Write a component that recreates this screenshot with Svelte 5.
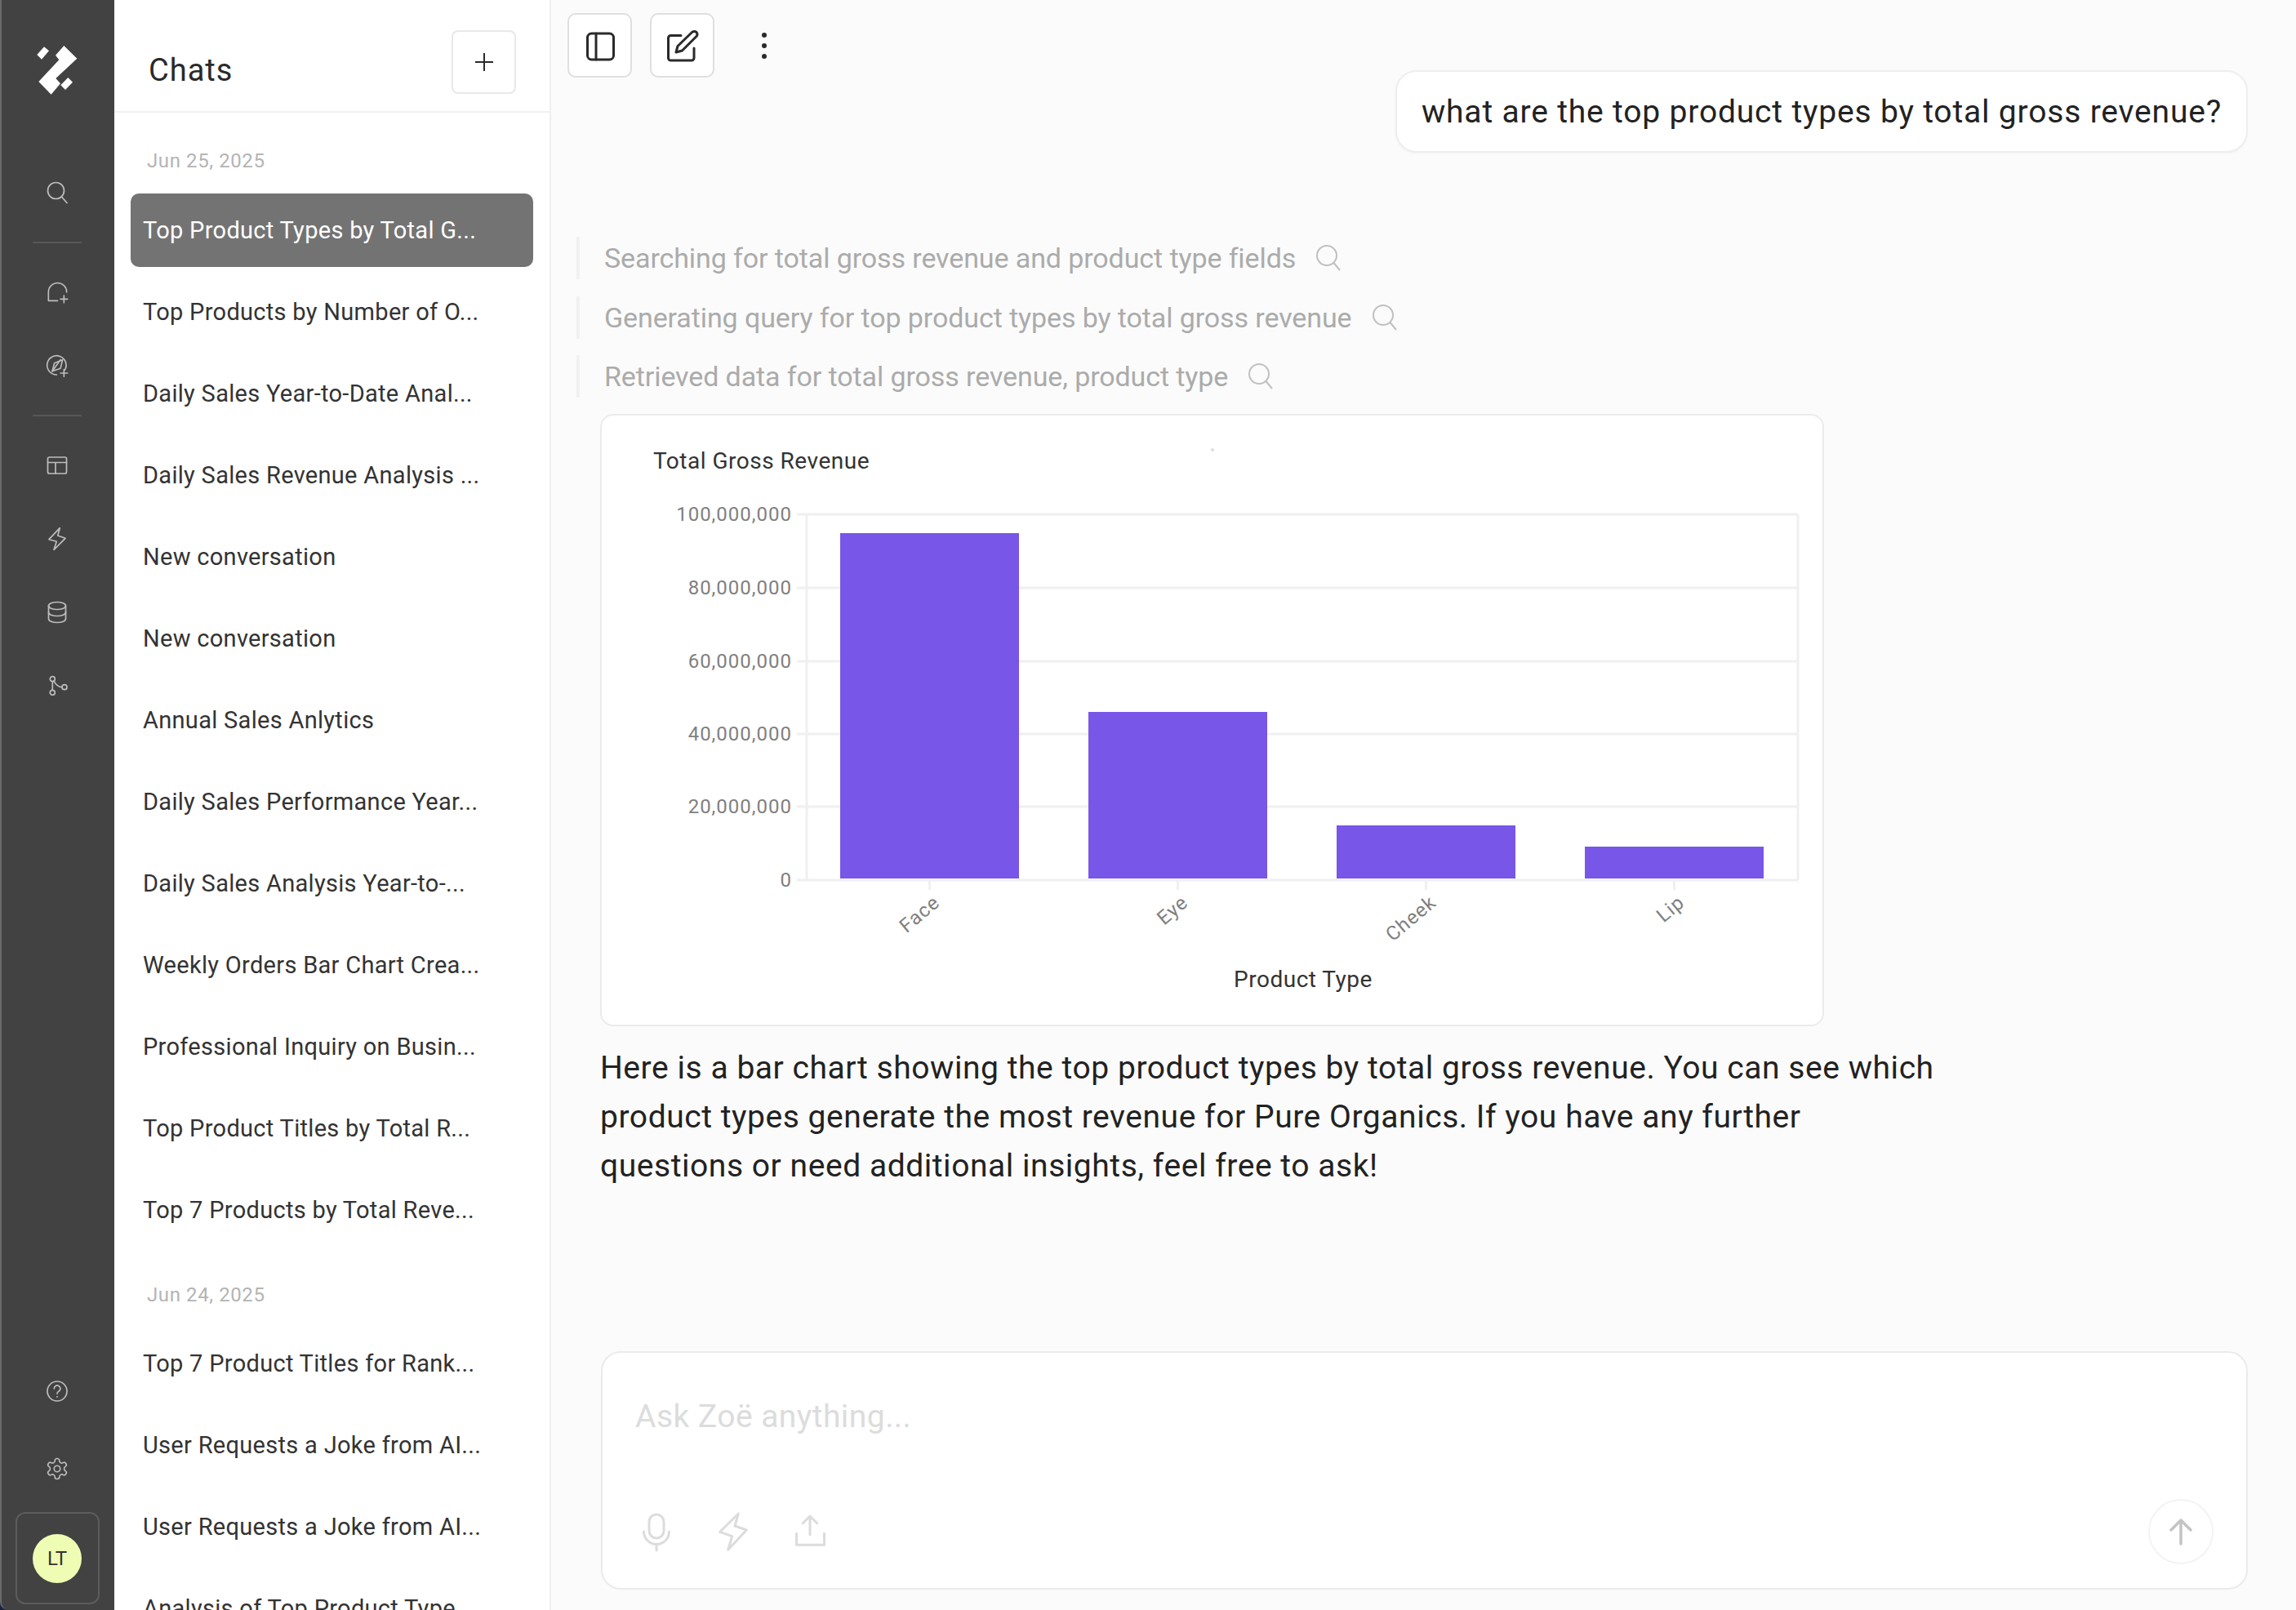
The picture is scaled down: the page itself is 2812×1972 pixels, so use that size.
<script lang="ts">
  const firstGroup = [
    "Top Product Types by Total G...",
    "Top Products by Number of O...",
    "Daily Sales Year-to-Date Anal...",
    "Daily Sales Revenue Analysis ...",
    "New conversation",
    "New conversation",
    "Annual Sales Anlytics",
    "Daily Sales Performance Year...",
    "Daily Sales Analysis Year-to-...",
    "Weekly Orders Bar Chart Crea...",
    "Professional Inquiry on Busin...",
    "Top Product Titles by Total R...",
    "Top 7 Products by Total Reve...",
  ];
  const secondGroup = [
    "Top 7 Product Titles for Rank...",
    "User Requests a Joke from AI...",
    "User Requests a Joke from AI...",
    "Analysis of Top Product Type",
  ];
  const steps = [
    "Searching for total gross revenue and product type fields",
    "Generating query for top product types by total gross revenue",
    "Retrieved data for total gross revenue, product type",
  ];

  // chart values, in page pixels of the plot area
  const plotLeft = 988;
  const plotRight = 2202;
  const axisY = 1078;
  const gridLines = [
    { y: 630, label: "100,000,000" },
    { y: 720, label: "80,000,000" },
    { y: 810, label: "60,000,000" },
    { y: 899, label: "40,000,000" },
    { y: 988, label: "20,000,000" },
    { y: 1078, label: "0" },
  ];
  const bars = [
    { name: "Face", x: 1029, top: 653 },
    { name: "Eye", x: 1333, top: 872 },
    { name: "Cheek", x: 1637, top: 1011 },
    { name: "Lip", x: 1941, top: 1037 },
  ];
  const barWidth = 219;
</script>

<div class="app">
  <nav class="rail">
    <div class="logo">
      <svg width="80" height="80" viewBox="0 0 240 240" fill="#fff">
        <path d="M72 37 90 52 63 83 46 66Z" />
        <path d="M145 33 193 80 115 153 132 172 98 212 52 165 127 85 114 68Z" />
        <path d="M160 150 177 167 150 195 133 178Z" />
      </svg>
    </div>

    <div class="rail-item">
      <svg width="30" height="30" viewBox="0 0 30 30" class="rail-icon">
        <circle cx="13.5" cy="12.5" r="10" />
        <path d="M20.5 20 27 27.5" />
      </svg>
    </div>
    <div class="rail-sep"></div>
    <div class="rail-item">
      <svg width="60" height="60" viewBox="0 0 180 180" class="rail-icon wide">
        <path d="M92 130H58V98a33.500 33.500 0 0 1 67 0" transform="translate(0 -9)" />
        <path d="M115 102v26M102 115h26" />
      </svg>
    </div>
    <div class="rail-item">
      <svg width="60" height="60" viewBox="0 0 180 180" class="rail-icon wide">
        <path d="M118 106A35 35 0 1 0 88 123" />
        <path d="M110 68 102 100 72 110 80 80Z" />
        <path d="M72 110 102 68" />
        <path d="M115 104v26M102 117h26" />
      </svg>
    </div>
    <div class="rail-sep"></div>
    <div class="rail-item">
      <svg width="30" height="30" viewBox="0 0 30 30" class="rail-icon">
        <rect x="3.500" y="5" width="23" height="20" rx="2" />
        <path d="M3.500 11.500h23M13 11.500V25" />
      </svg>
    </div>
    <div class="rail-item">
      <svg width="30" height="30" viewBox="0 0 30 30" class="rail-icon">
        <path d="M18.300 1.700 5 15.700 14.300 18.300 11 28.300 25 14.300 15.700 11Z" />
      </svg>
    </div>
    <div class="rail-item">
      <svg width="30" height="30" viewBox="0 0 30 30" class="rail-icon">
        <ellipse cx="15" cy="7" rx="10.500" ry="4.500" />
        <path d="M4.500 7v16c0 2.500 4.700 4.500 10.500 4.500s10.500-2 10.500-4.500V7" />
        <path d="M4.500 15c0 2.500 4.700 4.500 10.500 4.500s10.500-2 10.500-4.500" />
      </svg>
    </div>
    <div class="rail-item">
      <svg width="30" height="30" viewBox="0 0 30 30" class="rail-icon">
        <circle cx="9.300" cy="6.700" r="3" />
        <circle cx="9.300" cy="23.300" r="3" />
        <circle cx="24" cy="16.700" r="3" />
        <path d="M9.300 9.700v10.600M11 9.300c2 3.500 4.500 7 10 7.400" />
      </svg>
    </div>

    <div class="rail-bottom">
      <div class="rail-item">
        <svg width="30" height="30" viewBox="0 0 30 30" class="rail-icon">
          <circle cx="15" cy="15" r="12" />
          <path d="M11.300 11.800a3.800 3.800 0 1 1 5.800 3.200c-1.300.8-2.100 1.500-2.100 3" />
          <path d="M15 21.500v.5" />
        </svg>
      </div>
      <div class="rail-item">
        <svg width="30" height="30" viewBox="0 0 24 24" class="rail-icon gear">
          <path d="M12.220 2h-.44a2 2 0 0 0-2 2v.18a2 2 0 0 1-1 1.730l-.43.25a2 2 0 0 1-2 0l-.15-.08a2 2 0 0 0-2.730.73l-.22.38a2 2 0 0 0 .73 2.730l.15.1a2 2 0 0 1 1 1.720v.51a2 2 0 0 1-1 1.740l-.15.09a2 2 0 0 0-.73 2.730l.22.38a2 2 0 0 0 2.730.73l.15-.08a2 2 0 0 1 2 0l.43.25a2 2 0 0 1 1 1.730V20a2 2 0 0 0 2 2h.44a2 2 0 0 0 2-2v-.18a2 2 0 0 1 1-1.730l.43-.25a2 2 0 0 1 2 0l.15.08a2 2 0 0 0 2.730-.73l.22-.39a2 2 0 0 0-.73-2.730l-.15-.08a2 2 0 0 1-1-1.740v-.5a2 2 0 0 1 1-1.740l.15-.09a2 2 0 0 0 .73-2.730l-.22-.38a2 2 0 0 0-2.730-.73l-.15.08a2 2 0 0 1-2 0l-.43-.25a2 2 0 0 1-1-1.730V4a2 2 0 0 0-2-2z" />
          <circle cx="12" cy="12" r="3" />
        </svg>
      </div>
      <div class="user-box">
        <div class="avatar">LT</div>
      </div>
    </div>
  </nav>

  <aside class="sidebar">
    <header class="side-head">
      <h1>Chats</h1>
      <button class="add-btn" aria-label="New chat">
        <svg width="30" height="30" viewBox="0 0 30 30" fill="none" stroke="#2a2a2a" stroke-width="2">
          <path d="M15 4v22M4 15h22" />
        </svg>
      </button>
    </header>
    <div class="chat-list">
      <div class="date">Jun 25, 2025</div>
      {#each firstGroup as title, i}
        <div class="chat" class:active={i === 0}>{title}</div>
      {/each}
      <div class="date second">Jun 24, 2025</div>
      {#each secondGroup as title}
        <div class="chat">{title}</div>
      {/each}
    </div>
  </aside>

  <main class="main">
    <div class="toolbar">
      <button class="tool-btn" aria-label="Toggle sidebar">
        <svg width="40" height="40" viewBox="0 0 40 40" class="tool-icon">
          <rect x="4.500" y="5" width="32" height="32" rx="5" />
          <path d="M15 5v32" />
        </svg>
      </button>
      <button class="tool-btn" aria-label="New note">
        <svg width="40" height="40" viewBox="0 0 40 40" class="tool-icon">
          <path d="M18 7.500H5.500a3 3 0 0 0-3 3V35a3 3 0 0 0 3 3H31a3 3 0 0 0 3-3V23" />
          <path d="M12 28 14 20.500 31.500 3.500Q34.500 1.500 37 3.500 39 6 37 8.500L19.500 26Z" />
        </svg>
      </button>
      <button class="more-btn" aria-label="More">
        <span></span><span></span><span></span>
      </button>
    </div>

    <div class="bubble">what are the top product types by total gross revenue?</div>

    <div class="steps">
      {#each steps as step}
        <div class="step">
          <span>{step}</span>
          <svg width="34" height="34" viewBox="0 0 34 34" fill="none" stroke="#c0c0c0" stroke-width="2">
            <circle cx="15" cy="14" r="12" />
            <path d="M23.500 23 31 32" />
          </svg>
        </div>
      {/each}
    </div>

    <section class="chart-card">
      <svg class="chart" width="1495" height="746" viewBox="737 509 1495 746">
        <text x="800" y="574" class="title">Total Gross Revenue</text>
        <circle cx="1485" cy="551" r="2" fill="#dedede" />
        {#each gridLines as line}
          <line x1="976" y1={line.y} x2={plotRight} y2={line.y} class="grid" />
          <text x="970" y={line.y + 8} text-anchor="end" class="tick">{line.label}</text>
        {/each}
        <line x1={plotLeft} y1="630" x2={plotLeft} y2={axisY} class="grid" />
        <line x1={plotRight} y1="630" x2={plotRight} y2={axisY} class="grid" />
        {#each bars as bar}
          <rect x={bar.x} y={bar.top} width={barWidth} height={axisY - 2 - bar.top} fill="#7856e8" />
          <line x1={bar.x + barWidth / 2} y1={axisY} x2={bar.x + barWidth / 2} y2="1090" class="grid" />
          <text
            x={bar.x + barWidth / 2 + 14}
            y="1108"
            text-anchor="end"
            class="tick"
            transform="rotate(-40 {bar.x + barWidth / 2 + 14} 1108)">{bar.name}</text>
        {/each}
        <text x="1596" y="1209" text-anchor="middle" class="title">Product Type</text>
      </svg>
    </section>

    <p class="answer">
      Here is a bar chart showing the top product types by total gross revenue. You can see which product types generate the most revenue for Pure Organics. If you have any further questions or need additional insights, feel free to ask!
    </p>

    <div class="composer">
      <div class="placeholder">Ask Zoë anything...</div>
      <div class="composer-row">
        <svg width="50" height="50" viewBox="0 0 50 50" class="composer-icon">
          <rect x="16" y="4" width="18" height="29" rx="9" />
          <path d="M9.500 25a15.500 15.500 0 0 0 31 0M25 40.500V48" />
        </svg>
        <svg width="50" height="50" viewBox="0 0 50 50" class="composer-icon">
          <path d="M31.300 3 8.700 25.300 23.700 30.700 18.700 47.300 41.300 23 27 18Z" />
        </svg>
        <svg width="50" height="50" viewBox="0 0 50 50" class="composer-icon">
          <path d="M25 6v22.700M16.300 14.700 25 6l8.700 8.700M8.500 27.300v14h34v-14" />
        </svg>
        <button class="send" aria-label="Send">
          <svg width="40" height="40" viewBox="0 0 40 40" fill="none" stroke="#c4c4c4" stroke-width="3.500" stroke-linecap="round" stroke-linejoin="round">
            <path d="M20 6v29M8 18 20 6l12 12" />
          </svg>
        </button>
      </div>
    </div>
  </main>
</div>

<style>
  :global(body) {
    margin: 0;
    font-family: "Roboto", "Liberation Sans", sans-serif;
    color: #222;
  }

  .app {
    display: flex;
    width: 2812px;
    height: 1972px;
    overflow: hidden;
    background: #1c2340;
  }

  .rail {
    width: 138px;
    flex-shrink: 0;
    display: flex;
    flex-direction: column;
    align-items: center;
    box-sizing: content-box;
    background: #424242;
    border-left: 2px solid #6a6a6a;
    border-bottom-left-radius: 10px;
  }

  .logo {
    height: 191px;
    padding-top: 45px;
    box-sizing: border-box;
    margin-left: -2px;
  }

  .rail-item {
    height: 90px;
    width: 100%;
    margin-left: -2px;
    display: flex;
    align-items: center;
    justify-content: center;
  }

  .rail-icon {
    fill: none;
    stroke: #bdbdbd;
    stroke-width: 1.700;
    stroke-linecap: round;
    stroke-linejoin: round;
  }

  .rail-icon.wide {
    stroke-width: 5;
  }

  .rail-icon.gear {
    stroke-width: 1.300;
  }

  .rail-sep {
    width: 60px;
    height: 2px;
    margin: 15px 0 15px -2px;
    background: #575757;
  }

  .rail-bottom {
    margin-top: auto;
    width: 100%;
    display: flex;
    flex-direction: column;
    align-items: center;
    gap: 5px;
    padding-bottom: 7px;
  }

  .user-box {
    width: 103px;
    height: 113px;
    box-sizing: border-box;
    margin: 3px 0 0 -2px;
    border: 2px solid #5c5c5c;
    border-radius: 12px;
    display: flex;
    align-items: center;
    justify-content: center;
  }

  .avatar {
    width: 60px;
    height: 60px;
    border-radius: 50%;
    background: #effcb4;
    color: #333;
    font-size: 24px;
    display: flex;
    align-items: center;
    justify-content: center;
  }

  .sidebar {
    width: 535px;
    flex-shrink: 0;
    box-sizing: border-box;
    background: #fff;
    border-right: 2px solid #eeeeee;
    display: flex;
    flex-direction: column;
    overflow: hidden;
  }

  .side-head {
    height: 138px;
    flex-shrink: 0;
    box-sizing: border-box;
    border-bottom: 2px solid #f1f1f1;
    padding: 37px 41px 0 42px;
    display: flex;
    justify-content: space-between;
    align-items: flex-start;
  }

  h1 {
    margin: 27px 0 0;
    font-size: 38px;
    font-weight: 400;
    letter-spacing: 1px;
    color: #2a2a2a;
    line-height: 44px;
  }

  .add-btn {
    width: 79px;
    height: 78px;
    padding: 0;
    background: #fff;
    border: 2px solid #e8e8e8;
    border-radius: 8px;
    display: flex;
    align-items: center;
    justify-content: center;
  }

  .chat-list {
    padding: 40px 20px 0;
  }

  .date {
    height: 38px;
    line-height: 38px;
    padding-left: 20px;
    font-size: 24px;
    color: #b4b4b4;
    margin: 0 0 21px 0;
    letter-spacing: 0.6px;
  }

  .date.second {
    margin-top: 40px;
    margin-bottom: 20px;
  }

  .chat {
    height: 90px;
    line-height: 90px;
    margin-bottom: 10px;
    padding-left: 15px;
    border-radius: 10px;
    font-size: 29px;
    letter-spacing: 0.3px;
    white-space: nowrap;
    color: #333;
  }

  .chat.active {
    background: #737373;
    color: #fff;
  }

  .main {
    flex: 1;
    min-width: 0;
    background: #fbfbfb;
    display: flex;
    flex-direction: column;
  }

  .toolbar {
    display: flex;
    align-items: center;
    gap: 22px;
    padding: 16px 0 0 20px;
  }

  .tool-btn {
    width: 79px;
    height: 79px;
    padding: 0;
    background: #fff;
    border: 2px solid #dfdfdf;
    border-radius: 10px;
    display: flex;
    align-items: center;
    justify-content: center;
  }

  .tool-icon {
    fill: none;
    stroke: #2a2a2a;
    stroke-width: 3;
    stroke-linejoin: round;
    stroke-linecap: round;
  }

  .more-btn {
    width: 40px;
    height: 60px;
    margin-left: 19px;
    padding: 0;
    border: 0;
    background: none;
    display: flex;
    flex-direction: column;
    align-items: center;
    justify-content: center;
    gap: 7px;
  }

  .more-btn span {
    width: 6px;
    height: 6px;
    border-radius: 50%;
    background: #2a2a2a;
  }

  .bubble {
    align-self: flex-end;
    margin: -9px 59px 0 0;
    height: 101px;
    box-sizing: border-box;
    padding: 0 30px;
    display: flex;
    align-items: center;
    background: #fff;
    border: 2px solid #eeeeee;
    border-radius: 26px;
    box-shadow: 0 1px 3px rgba(0, 0, 0, 0.04);
    font-size: 39px;
    letter-spacing: 0.82px;
    white-space: nowrap;
    color: #222;
  }

  .steps {
    margin: 103px 0 0 31px;
    display: flex;
    flex-direction: column;
    gap: 20.500px;
  }

  .step {
    height: 52px;
    border-left: 4px solid #f1f1f1;
    padding-left: 30px;
    display: flex;
    align-items: center;
    gap: 23px;
    font-size: 34px;
    letter-spacing: -0.1px;
    color: #ababab;
  }

  .chart-card {
    width: 1499px;
    height: 750px;
    box-sizing: border-box;
    margin: 20px 0 0 60px;
    background: #fff;
    border: 2px solid #ebebeb;
    border-radius: 16px;
  }

  .chart {
    display: block;
  }

  .chart .title {
    font-size: 28px;
    letter-spacing: 0.5px;
    fill: #333;
  }

  .chart .tick {
    font-size: 24px;
    letter-spacing: 1px;
    fill: #808080;
  }

  .chart .grid {
    stroke: #f0f0f0;
    stroke-width: 3;
  }

  .answer {
    width: 1650px;
    margin: 21px 0 0 60px;
    font-size: 39px;
    line-height: 60px;
    letter-spacing: 0.55px;
    color: #222;
  }

  .composer {
    margin: auto 59px 25px 61px;
    height: 292px;
    box-sizing: border-box;
    background: #fff;
    border: 2px solid #ebebeb;
    border-radius: 24px;
    padding: 50px 40px 0 40px;
    display: flex;
    flex-direction: column;
  }

  .placeholder {
    height: 56px;
    line-height: 56px;
    font-size: 39px;
    letter-spacing: 0.45px;
    color: #dcdcdc;
  }

  .composer-row {
    display: flex;
    align-items: center;
    gap: 44px;
    margin-top: 73px;
    padding-left: 1px;
  }

  .composer-icon {
    fill: none;
    stroke: #dcdcdc;
    stroke-width: 3;
    stroke-linecap: round;
    stroke-linejoin: round;
  }

  .send {
    width: 80px;
    height: 80px;
    padding: 0;
    margin-left: auto;
    background: #fff;
    border: 2px solid #f3f3f3;
    border-radius: 50%;
    display: flex;
    align-items: center;
    justify-content: center;
  }
</style>
